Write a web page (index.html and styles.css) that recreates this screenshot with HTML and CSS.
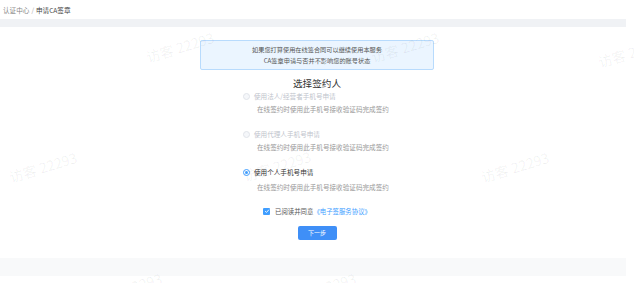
FILE: index.html
```html
<!DOCTYPE html>
<html lang="zh-CN">
<head>
<meta charset="utf-8">
<title>申请CA签章</title>
<link rel="stylesheet" href="styles.css">
</head>
<body>
<div class="app">
  <div class="main">
    <div class="header">
      <span class="crumb">认证中心</span>
      <span class="sep">/</span>
      <span class="crumb-current">申请CA签章</span>
    </div>
    <div class="content">
      <div class="notice">
        <div>如果您打算使用在线签合同可以继续使用本服务</div>
        <div>CA签章申请与否并不影响您的账号状态</div>
      </div>
      <div class="title">选择签约人</div>
      <div class="options">
        <div class="option disabled">
          <div class="opt-row"><span class="radio"></span><span class="opt-label">使用法人/经营者手机号申请</span></div>
          <div class="opt-desc">在线签约时使用此手机号接收验证码完成签约</div>
        </div>
        <div class="option disabled">
          <div class="opt-row"><span class="radio"></span><span class="opt-label">使用代理人手机号申请</span></div>
          <div class="opt-desc">在线签约时使用此手机号接收验证码完成签约</div>
        </div>
        <div class="option checked">
          <div class="opt-row"><span class="radio"><span class="dot"></span></span><span class="opt-label">使用个人手机号申请</span></div>
          <div class="opt-desc">在线签约时使用此手机号接收验证码完成签约</div>
        </div>
      </div>
      <div class="agree">
        <span class="checkbox"><svg viewBox="0 0 8 8" width="6" height="6"><path d="M1.5 4.2 L3.3 5.9 L6.6 2.2" fill="none" stroke="#fff" stroke-width="1.2"/></svg></span>
        <span class="agree-text">已阅读并同意</span><span class="link">《电子签服务协议》</span>
      </div>
      <button class="btn">下一步</button>
      <div class="footer-strip"></div>
    </div>
  </div>
  <div class="scroll"></div>
  <div class="watermarks">
    <span class="wm w1">访客 22293</span>
    <span class="wm w2">访客 22293</span>
    <span class="wm w3">访客 22293</span>
    <span class="wm w4">访客 22293</span>
    <span class="wm w5">访客 22293</span>
    <span class="wm w6">访客 22293</span>
    <span class="wm w7">访客 22293</span>
    <span class="wm w8">访客 22293</span>
  </div>
</div>
</body>
</html>
```

FILE: styles.css
```css
* { box-sizing: border-box; }
html, body { margin: 0; padding: 0; background: #fff; }
body {
  font-family: "Noto Sans CJK SC", "Noto Sans", sans-serif;
  color: #333;
  overflow: hidden;
}
.app {
  position: relative;
  display: flex;
  width: 634px;
  height: 283px;
  overflow: hidden;
}
.main {
  width: 626px;
  background: #f0f2f5;
  display: flex;
  flex-direction: column;
}
.scroll { width: 8px; background: #fff; }
.header {
  height: 19px;
  background: #fff;
  display: flex;
  align-items: center;
  padding-left: 3px;
  font-size: 6.6px;
  margin-bottom: 8px;
  gap: 2px;
}
.crumb { color: #888; }
.sep { color: #aaa; }
.crumb-current { color: #444; }
.content {
  flex: 1;
  background: #fff;
  display: flex;
  flex-direction: column;
  align-items: center;
  padding-top: 13px;
  padding-left: 8px;
}
.notice {
  width: 234px;
  height: 30px;
  background: #ebf5ff;
  border: 1px solid #b8dbfd;
  border-radius: 2px;
  display: flex;
  flex-direction: column;
  justify-content: center;
  align-items: center;
  font-size: 6.2px;
  line-height: 11px;
  color: #555;
}
.title {
  margin-top: 7px;
  font-size: 9.6px;
  line-height: 12px;
  color: #333;
}
.options {
  width: 148px;
  margin-top: 2px;
  display: flex;
  flex-direction: column;
  gap: 15px;
}
.opt-row {
  display: flex;
  align-items: center;
  height: 10px;
  gap: 4px;
}
.radio {
  width: 7px;
  height: 7px;
  border-radius: 50%;
  border: 1px solid #e1e4ea;
  background: #f5f7fa;
  display: flex;
  align-items: center;
  justify-content: center;
  flex: none;
}
.checked .radio { border-color: #409eff; background: #fff; }
.dot { width: 3px; height: 3px; border-radius: 50%; background: #409eff; }
.opt-label { font-size: 6.6px; color: #c0c4cc; }
.checked .opt-label { color: #333; }
.opt-desc {
  margin-top: 3px;
  padding-left: 14px;
  font-size: 6.6px;
  line-height: 10px;
  color: #999;
  white-space: nowrap;
}
.checked .opt-desc { margin-top: 5px; }
.agree {
  margin-top: 14px;
  height: 10px;
  display: flex;
  align-items: center;
  font-size: 6.4px;
}
.checkbox {
  width: 7px;
  height: 7px;
  border-radius: 1px;
  background: #409eff;
  display: flex;
  align-items: center;
  justify-content: center;
  margin-right: 5px;
}
.agree-text { color: #555; }
.link { color: #409eff; }
.btn {
  margin-top: 10px;
  width: 39px;
  height: 14px;
  border: none;
  border-radius: 2px;
  background: #3f8ff7;
  color: #fff;
  font-family: inherit;
  font-size: 6px;
  padding: 0;
  line-height: 14px;
}
.footer-strip {
  margin-top: 18px;
  width: calc(100% + 8px);
  margin-left: -8px;
  height: 18px;
  background: #f8f9fa;
}
.watermarks {
  position: absolute;
  inset: 0;
  pointer-events: none;
}
.wm {
  position: absolute;
  font-size: 14px;
  color: rgba(0, 0, 0, 0.06);
  transform: translate(-50%, -50%) rotate(-17deg);
  white-space: nowrap;
}
.w1 { left: 180px; top: 47px; }
.w2 { left: 405px; top: 47px; }
.w3 { left: 632px; top: 52px; }
.w4 { left: 43px; top: 167px; }
.w5 { left: 277px; top: 166px; }
.w6 { left: 515px; top: 167px; }
.w7 { left: 128px; top: 288px; }
.w8 { left: 322px; top: 288px; }
```
